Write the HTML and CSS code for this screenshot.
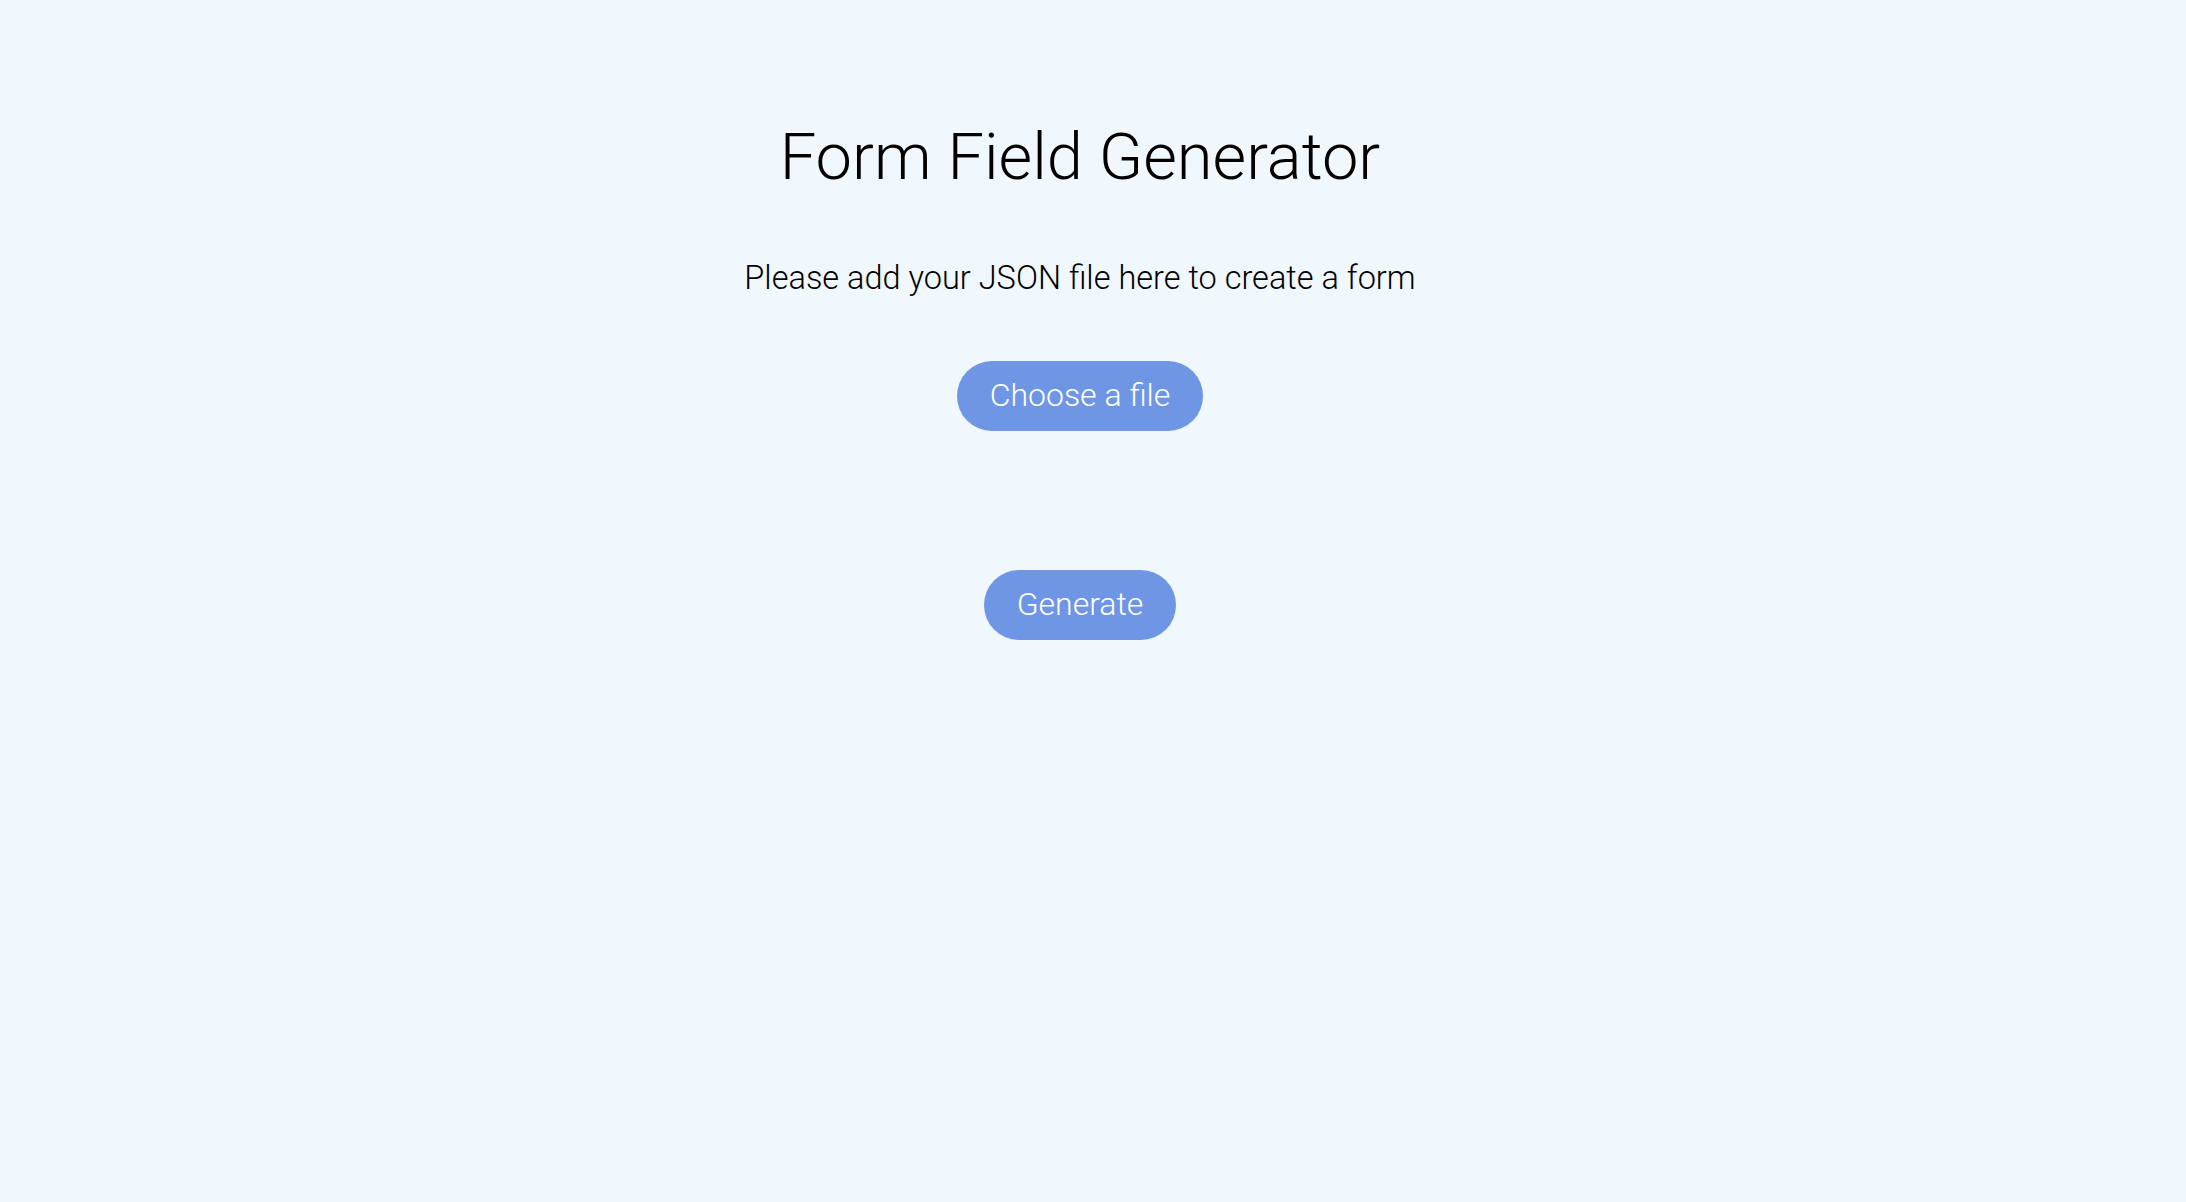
FILE: index.html
```html
<!DOCTYPE html>
<html lang="en">
<head>
<meta charset="utf-8">
<title>Form Field Generator</title>
<link rel="stylesheet" href="styles.css">
</head>
<body>
<main class="page">
  <h1 class="title">Form Field Generator</h1>
  <p class="subtitle">Please add your JSON file here to create a form</p>
  <label class="btn file-btn">Choose a file<input type="file" class="file-input" accept=".json"></label>
  <button class="btn gen-btn" type="button">Generate</button>
</main>
</body>
</html>
```
FILE: styles.css
```css
html, body {
  margin: 0;
  padding: 0;
  background: #f0f8fe;
  height: 100%;
}
body {
  font-family: Roboto, "Noto Sans", sans-serif;
  color: #000;
}
.page {
  display: flex;
  flex-direction: column;
  align-items: center;
  padding-top: 125px;
  padding-right: 26px;
}
.title {
  margin: 0;
  font-size: 65px;
  font-weight: 300;
  line-height: 1;
}
.subtitle {
  margin: 72px 0 0;
  font-size: 32.5px;
  font-weight: 300;
  line-height: 1;
}
.btn {
  display: inline-flex;
  align-items: center;
  justify-content: center;
  height: 70px;
  padding: 0 33px 2px;
  border: none;
  border-radius: 35px;
  background: #6e96e5;
  color: #fff;
  font-family: inherit;
  font-size: 32px;
  font-weight: 300;
  line-height: 1;
  box-sizing: border-box;
  cursor: pointer;
}
.file-btn {
  margin-top: 66px;
}
.file-input {
  display: none;
}
.gen-btn {
  margin-top: 139px;
}
```
